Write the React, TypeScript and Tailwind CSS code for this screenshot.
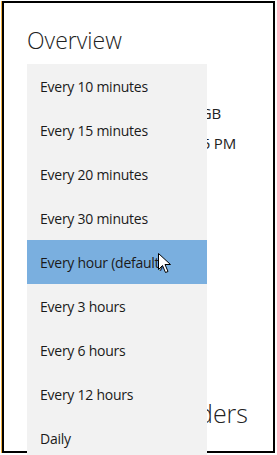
const options = [
  'Every 10 minutes',
  'Every 15 minutes',
  'Every 20 minutes',
  'Every 30 minutes',
  'Every hour (default)',
  'Every 3 hours',
  'Every 6 hours',
  'Every 12 hours',
  'Daily',
]

function Cursor() {
  return (
    <svg width="13" height="21" viewBox="0 0 13 21" className="absolute left-[158px] top-[253px]">
      <path
        d="M0.5 0.5 L0.5 16.5 L4.5 12.5 L7.5 19.5 L10 18.5 L7 11.5 L12.5 11.5 Z"
        fill="#fff"
        stroke="#000"
        strokeWidth="1"
      />
    </svg>
  )
}

// text row of the page behind the flyout; only the part right of the flyout shows
function PeekRow({ text, width, className }: { text: string; width: string; className: string }) {
  return (
    <div className={`ml-[180px] flex justify-end overflow-hidden whitespace-nowrap ${width} ${className}`}>
      <span className="shrink-0">{text}</span>
    </div>
  )
}

export default function App() {
  return (
    <div className="relative h-[455px] w-[277px] overflow-hidden bg-white" style={{ fontFamily: '"Open Sans", "Noto Sans", sans-serif' }}>
      {/* window frame */}
      <div className="absolute left-[2px] top-[1px] h-[452px] w-[273px] border-2 border-black shadow-[-1px_0_0_#f0b040]" />

      {/* page behind the flyout */}
      <div className="flex flex-col px-[27px] pt-[25px] text-[#222]">
        <h1 className="text-[23px] font-light leading-[30px]">Overview</h1>
        <PeekRow text="Space used: 2.4 GB" width="w-[14px]" className="mt-[43px] text-[15px] leading-[30px] tracking-[-0.2px]" />
        <PeekRow text="Last sync: 10:45 PM" width="w-[29px]" className="text-[15px] leading-[30px] tracking-[-0.2px]" />
        <PeekRow text="Subfolders" width="w-[41px]" className="mt-[238px] text-[25px] font-light leading-[34px]" />
      </div>

      {/* dropdown flyout */}
      <ul className="absolute left-[27px] top-[64px] flex w-[180px] flex-col bg-[#f2f2f2] text-[14px] tracking-[-0.25px] text-[#1a1a1a]">
        {options.map((o) => (
          <li
            key={o}
            className={`flex h-[44px] items-center pl-[13px] ${o === 'Every hour (default)' ? 'bg-[#7aafdf]' : ''}`}
          >
            {o}
          </li>
        ))}
      </ul>

      <Cursor />
    </div>
  )
}
